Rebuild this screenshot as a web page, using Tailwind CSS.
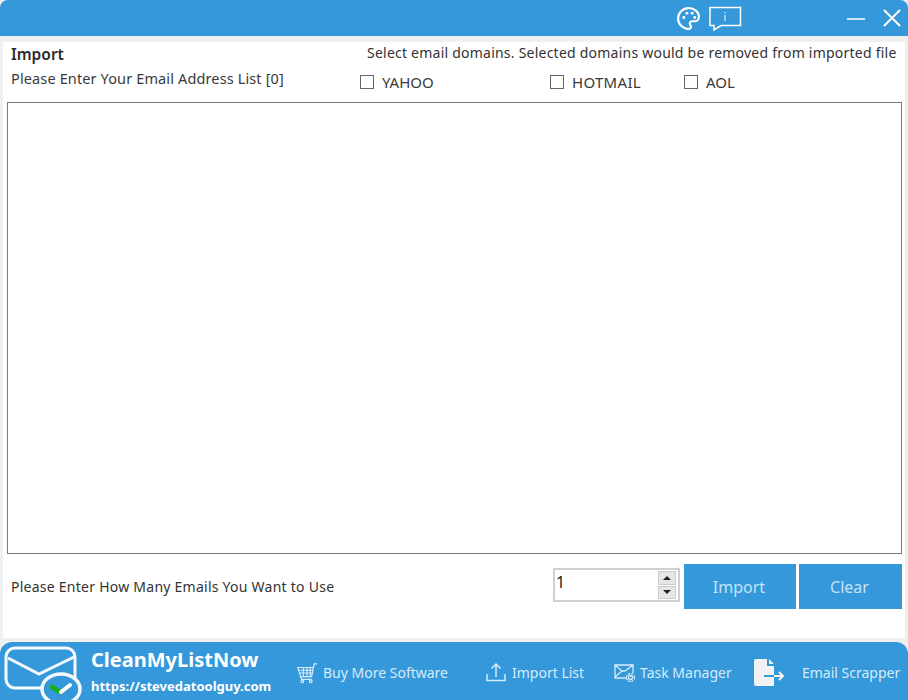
<!DOCTYPE html>
<html lang="en">
<head>
    <meta charset="UTF-8">
    <title>CleanMyListNow - Import</title>
    <script src="https://cdn.jsdelivr.net/npm/@tailwindcss/browser@4"></script>
</head>
<body class="w-[908px] h-[700px] overflow-hidden bg-white font-['Noto_Sans',sans-serif] text-[#333]">
    <div class="flex flex-col h-[700px] bg-[#f0f0f0]">
        <!-- Title bar -->
        <div class="h-[36px] shrink-0 bg-[#3498db] rounded-tl-[8px] rounded-tr-[8px] flex items-center text-white">
            <svg class="ml-[676px] w-[25px] h-[25px]" viewBox="0 0 24 24" fill="none" stroke="#fff" stroke-width="2">
                <path d="M12 2C6.5 2 2 6.5 2 12s4.500 10 10 10c1.500 0 2.400-1 2.400-2.200 0-.6-.3-1.100-.6-1.500-.4-.4-.6-.9-.6-1.500 0-1.200 1-2.200 2.200-2.200H18c2.300 0 4-1.800 4-4.100C22 5.600 17.500 2 12 2z"/>
                <circle cx="7.500" cy="11" r="1.400" fill="#fff" stroke="none"/>
                <circle cx="10.500" cy="7" r="1.400" fill="#fff" stroke="none"/>
                <circle cx="15.500" cy="7" r="1.400" fill="#fff" stroke="none"/>
                <circle cx="18" cy="11" r="1.400" fill="#fff" stroke="none"/>
            </svg>
            <svg class="ml-[7px] mt-[1px] w-[34px] h-[26px]" viewBox="0 0 34 26" fill="none" stroke="#fff" stroke-width="1.500">
                <path d="M2 1.500h30.500v18H13l-7 4.500v-4.500H2z"/>
                <path d="M17 9v6M17 6v1.500" stroke-width="1"/>
            </svg>
            <svg class="ml-[105px] w-[18px] h-[18px]" viewBox="0 0 18 18" stroke="#fff" stroke-width="1.500"><path d="M0 10h18"/></svg>
            <svg class="ml-[18px] w-[18px] h-[18px]" viewBox="0 0 18 18" stroke="#fff" stroke-width="2"><path d="M1 1l16 16M17 1L1 17"/></svg>
        </div>

        <!-- Main panel -->
        <div class="mt-[6px] ml-[3px] mr-[3px] h-[596px] shrink-0 bg-white flex flex-col pl-[4px] pr-[3px]">
            <div class="h-[60px] shrink-0 flex">
                <div class="w-[353px] pl-[4px] pt-[2px]">
                    <div class="text-[15.500px] leading-[21px] font-semibold text-[#2b2b2b]">Import</div>
                    <div class="text-[14.500px] tracking-[0.13px] leading-[20px] mt-[3px] text-[#3a3a3a] whitespace-nowrap">Please Enter Your Email Address List [0]</div>
                </div>
                <div class="flex-1">
                    <div class="text-[14px] leading-[18px] tracking-[0.23px] pl-[7px] pt-[2px] whitespace-nowrap text-[#333]">Select email domains. Selected domains would be removed from imported file</div>
                    <div class="flex items-center mt-[10px] text-[15px] leading-[20px] text-[#3a3a3a]">
                        <div class="w-[190px] flex items-center"><span class="w-[14px] h-[14px] border border-[#666] mr-[8px]"></span>YAHOO</div>
                        <div class="w-[134px] flex items-center"><span class="w-[14px] h-[14px] border border-[#666] mr-[8px]"></span><span class="tracking-[0.3px]">HOTMAIL</span></div>
                        <div class="flex items-center"><span class="w-[14px] h-[14px] border border-[#666] mr-[8px]"></span>AOL</div>
                    </div>
                </div>
            </div>

            <div class="h-[452px] shrink-0 border border-[#7a7a7a] bg-white"></div>

            <div class="flex items-start mt-[10px]">
                <div class="w-[546px] pl-[4px] pt-[13px] text-[14px] tracking-[0.25px] leading-[20px] text-[#333] whitespace-nowrap">Please Enter How Many Emails You Want to Use</div>
                <div class="w-[127px] h-[34px] mt-[4px] border-2 border-[#d0d0d0] flex justify-between pl-[1px] pr-[2px] text-[16px] leading-[24px] text-[#222]">
                    <span>1</span>
                    <div class="w-[18px] flex flex-col gap-[1px] py-[1px]">
                        <div class="flex-1 bg-[#e6e6e6] border border-[#ccc] flex items-center justify-center"><span class="w-0 h-0 border-x-[4px] border-x-transparent border-b-[4px] border-b-[#222]"></span></div>
                        <div class="flex-1 bg-[#e6e6e6] border border-[#ccc] flex items-center justify-center"><span class="w-0 h-0 border-x-[4px] border-x-transparent border-t-[4px] border-t-[#222]"></span></div>
                    </div>
                </div>
                <button class="w-[112px] h-[45px] ml-[4px] pr-[2px] bg-[#3498db] text-[#c5e3f6] text-[16px]">Import</button>
                <button class="w-[103px] h-[45px] ml-[3px] pr-[2px] bg-[#3498db] text-[#c5e3f6] text-[16px]">Clear</button>
            </div>
        </div>

        <!-- Footer -->
        <div class="mt-[4px] h-[58px] shrink-0 bg-[#3498db] rounded-tl-[12px] rounded-tr-[12px] flex items-center text-[#d6ebf9] overflow-hidden">
            <div class="relative w-[91px] h-[58px] shrink-0">
                <svg class="absolute left-0 top-0 w-[90px] h-[58px]" viewBox="0 0 90 58" fill="none" stroke="#f4f9fd" stroke-width="3">
                    <rect x="6" y="6" width="69" height="40" rx="9"/>
                    <path d="M8 16l31 16 35-17"/>
                    <ellipse cx="61" cy="47" rx="19" ry="15" fill="#3498db" stroke-width="3.500"/>
                    <path d="M52 45l8 5" stroke="#16b01e" stroke-width="5" stroke-linecap="round"/>
                    <path d="M61 50l9-7" stroke="#fff" stroke-width="4" stroke-linecap="round"/>
                </svg>
            </div>
            <div class="w-[205px] shrink-0 text-white">
                <div class="text-[20px] leading-[26px] font-bold">CleanMyListNow</div>
                <div class="text-[13px] leading-[18px] font-bold mt-[4px]">https://stevedatoolguy.com</div>
            </div>
            <svg class="w-[22px] h-[22px] shrink-0 mt-[3px]" viewBox="0 0 24 24" fill="none" stroke="#d6ebf9" stroke-width="1.300">
                <path d="M1 6h18l-2 10H5L2 6zM19 6l1-4h3M3 9h15M4 12h14M8 6v10M12 6v10M15.500 6v10M5 16l1 3h11"/>
                <circle cx="7" cy="21" r="1.500"/><circle cx="16" cy="21" r="1.500"/>
            </svg>
            <span class="ml-[5px] w-[163px] shrink-0 text-[14px] whitespace-nowrap mt-[3px]">Buy More Software</span>
            <svg class="w-[20px] h-[20px] shrink-0 mt-[2px]" viewBox="0 0 20 20" fill="none" stroke="#d6ebf9" stroke-width="1.500">
                <path d="M1 12v6.500h18V12M10 15V2M5.500 6.500L10 2l4.500 4.500"/>
            </svg>
            <span class="ml-[6px] w-[102px] shrink-0 text-[14px] whitespace-nowrap mt-[3px]">Import List</span>
            <svg class="w-[22px] h-[20px] shrink-0 mt-[4px]" viewBox="0 0 22 20" fill="none" stroke="#d6ebf9" stroke-width="1.300">
                <path d="M13 15H1V2h18v8M1 2l7 6-7 6M19 2l-8 6-3 0"/>
                <circle cx="16.500" cy="14.500" r="2"/>
                <circle cx="16.500" cy="14.500" r="4" stroke-dasharray="2 1.200"/>
            </svg>
            <span class="ml-[4px] w-[113px] shrink-0 text-[14px] whitespace-nowrap mt-[3px]">Task Manager</span>
            <svg class="w-[32px] h-[28px] shrink-0 mt-[4px]" viewBox="0 0 32 28" fill="none">
                <path d="M1 2a2 2 0 012-2h11v7h7v20H3a2 2 0 01-2-2zM16 0l5 5h-5z" fill="#f2f2f2"/>
                <path d="M11 17h10" stroke="#3498db" stroke-width="2"/>
                <path d="M21 17h9M26 13l4 4-4 4" stroke="#f2f2f2" stroke-width="2"/>
            </svg>
            <span class="ml-[17px] text-[14px] whitespace-nowrap mt-[3px]">Email Scrapper</span>
        </div>
    </div>
</body>
</html>
